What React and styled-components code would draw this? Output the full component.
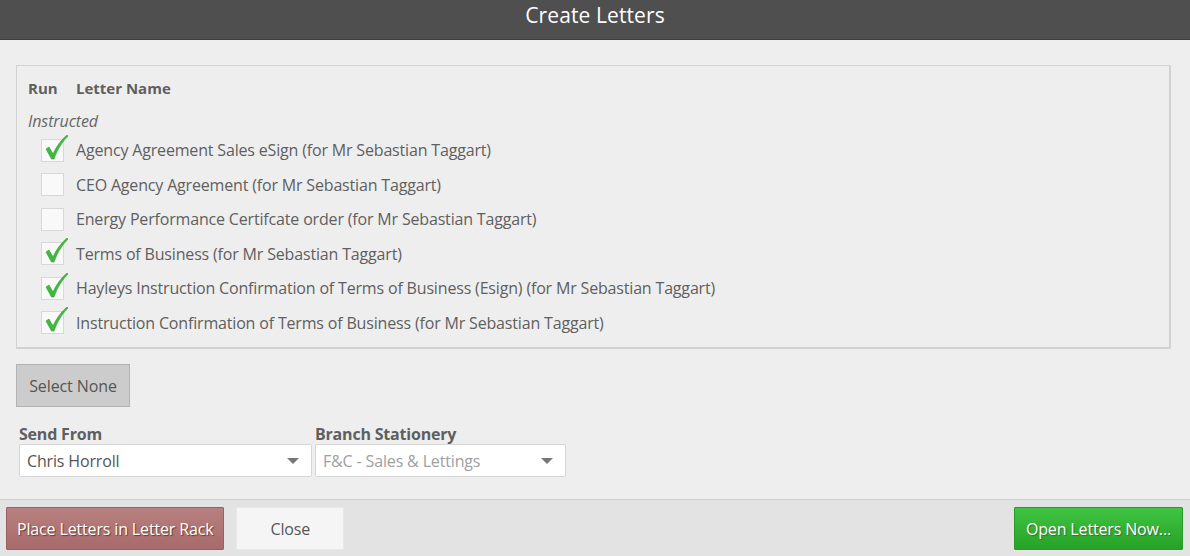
import React from 'react'
import styled, { createGlobalStyle } from 'styled-components'

const Global = createGlobalStyle`
  html, body {
    margin: 0;
    padding: 0;
    background: #eeeeee;
  }
  body {
    font-family: "Open Sans", "Liberation Sans", sans-serif;
    color: #5a5a5a;
  }
`

const Dialog = styled.div`
  width: 1190px;
  height: 556px;
  display: flex;
  flex-direction: column;
  background: #eeeeee;
  overflow: hidden;
`

const Header = styled.div`
  height: 40px;
  flex: 0 0 40px;
  background: #4f4f4f;
  border-bottom: 1px solid #3d3d3d;
  color: #ffffff;
  font-size: 21px;
  letter-spacing: 0.1px;
  display: flex;
  align-items: center;
  justify-content: center;
  padding-bottom: 10px;
  box-sizing: border-box;
`

const Body = styled.div`
  flex: 1;
  padding: 25px 19px 0 16px;
  display: flex;
  flex-direction: column;
`

const LetterBox = styled.div`
  border: 1px solid #d2d2d2;
  border-right-width: 2px;
  border-bottom-width: 2px;
  padding: 11px 11px 7px 11px;
  display: flex;
  flex-direction: column;
`

const HeadRow = styled.div`
  display: flex;
  font-weight: 700;
  font-size: 15px;
  color: #5f5f5f;
  height: 22px;
  align-items: center;
`

const RunCol = styled.div`
  width: 48px;
`

const Group = styled.div`
  font-style: italic;
  font-size: 16px;
  letter-spacing: -0.1px;
  color: #666666;
  margin-top: 11px;
  margin-bottom: 1px;
  height: 22px;
  display: flex;
  align-items: center;
`

const Row = styled.label`
  display: flex;
  align-items: center;
  height: 34.5px;
  padding-left: 13px;
  font-size: 16px;
  letter-spacing: -0.17px;
  color: #5f5f5f;
`

const Box = styled.span`
  position: relative;
  width: 21px;
  height: 21px;
  border: 1px solid #d8d8d8;
  background: #f9f9f9;
  margin-right: 12px;
  flex: 0 0 auto;
  svg {
    position: absolute;
    left: 1px;
    top: -6px;
  }
`

const SelectNone = styled.button`
  margin-top: 15px;
  align-self: flex-start;
  width: 114px;
  height: 43px;
  background: #cccccc;
  border: 1px solid #b3b3b3;
  font-family: inherit;
  font-size: 16px;
  letter-spacing: -0.1px;
  color: #555555;
  padding: 0;
`

const Fields = styled.div`
  display: flex;
  gap: 3px;
  margin-top: 18px;
  padding-left: 3px;
`

const Field = styled.div`
  display: flex;
  flex-direction: column;
  width: ${p => p.w}px;
`

const Label = styled.div`
  font-weight: 700;
  font-size: 16px;
  letter-spacing: -0.2px;
  color: #5f5f5f;
  height: 19px;
  line-height: 19px;
`

const Select = styled.div`
  height: 31px;
  background: #ffffff;
  border: 1px solid #d6d6d6;
  border-radius: 2px;
  display: flex;
  align-items: center;
  justify-content: space-between;
  padding: 0 12px 0 7px;
  font-size: 16px;
  letter-spacing: -0.15px;
  color: ${p => (p.muted ? '#a0a0a0' : '#555555')};
`

const Caret = styled.span`
  width: 0;
  height: 0;
  border-left: 6px solid transparent;
  border-right: 6px solid transparent;
  border-top: 6px solid #777777;
`

const Footer = styled.div`
  flex: 0 0 55px;
  border-top: 1px solid #cfcfcf;
  background: #e3e3e3;
  display: flex;
  align-items: center;
  padding: 1px 7px 0 6px;
  gap: 12px;
`

const Button = styled.button`
  height: 43px;
  padding: 0 ${p => p.px || 12}px;
  font-family: inherit;
  font-size: 16px;
  letter-spacing: -0.15px;
  border-radius: 1px;
  cursor: pointer;
  ${p =>
    p.kind === 'danger' &&
    `
    background: linear-gradient(#b88080, #a86a6a);
    border: 1px solid #9a5f5f;
    color: #ffffff;
    text-shadow: 1px 1px 1px #6a3a2a;
  `}
  ${p =>
    p.kind === 'plain' &&
    `
    background: #f5f5f5;
    border: 1px solid #e8e8e8;
    color: #555555;
  `}
  ${p =>
    p.kind === 'go' &&
    `
    background: linear-gradient(#40c443, #26a227);
    border: 1px solid #2a9a2a;
    color: #ffffff;
    text-shadow: 1px 1px 1px #3b6a2a;
    margin-left: auto;
  `}
`

const Tick = () => (
  <svg width="26" height="28" viewBox="0 0 26 28">
    <path
      d="M3 15 L6 13 L10 20 C13 13 18 6 24 1 L25 2 C19 8 14 16 11 25 L8.5 25 Z"
      fill="#3fb93f"
      stroke="#2f9f2f"
      strokeWidth="0.6"
    />
  </svg>
)

const letters = [
  { name: 'Agency Agreement Sales eSign (for Mr Sebastian Taggart)', on: true },
  { name: 'CEO Agency Agreement (for Mr Sebastian Taggart)', on: false },
  { name: 'Energy Performance Certifcate order (for Mr Sebastian Taggart)', on: false },
  { name: 'Terms of Business (for Mr Sebastian Taggart)', on: true },
  { name: 'Hayleys Instruction Confirmation of Terms of Business (Esign) (for Mr Sebastian Taggart)', on: true },
  { name: 'Instruction Confirmation of Terms of Business (for Mr Sebastian Taggart)', on: true },
]

export default function App() {
  return (
    <Dialog>
      <Global />
      <Header>Create Letters</Header>
      <Body>
        <LetterBox>
          <HeadRow>
            <RunCol>Run</RunCol>
            <div>Letter Name</div>
          </HeadRow>
          <Group>Instructed</Group>
          {letters.map(l => (
            <Row key={l.name}>
              <Box>{l.on && <Tick />}</Box>
              {l.name}
            </Row>
          ))}
        </LetterBox>
        <SelectNone>Select None</SelectNone>
        <Fields>
          <Field w={293}>
            <Label>Send From</Label>
            <Select>
              Chris Horroll
              <Caret />
            </Select>
          </Field>
          <Field w={251}>
            <Label>Branch Stationery</Label>
            <Select muted>
              F&amp;C - Sales &amp; Lettings
              <Caret />
            </Select>
          </Field>
        </Fields>
      </Body>
      <Footer>
        <Button kind="danger" px={10}>Place Letters in Letter Rack</Button>
        <Button kind="plain" px={33}>Close</Button>
        <Button kind="go" px={11}>Open Letters Now...</Button>
      </Footer>
    </Dialog>
  )
}
